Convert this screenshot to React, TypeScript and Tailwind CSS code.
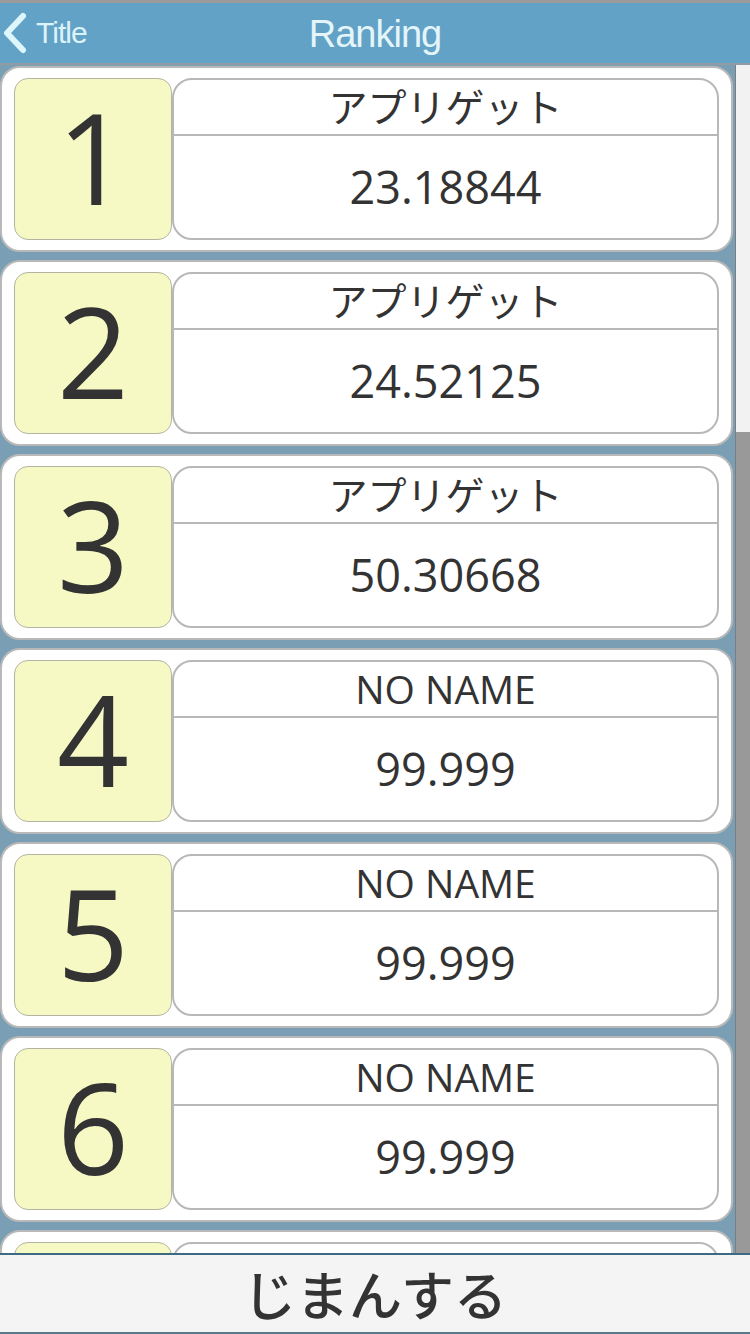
import React from "react";

type Entry = { rank: number; name: string; score: string };

const ENTRIES: Entry[] = [
    { rank: 1, name: "アプリゲット", score: "23.18844" },
    { rank: 2, name: "アプリゲット", score: "24.52125" },
    { rank: 3, name: "アプリゲット", score: "50.30668" },
    { rank: 4, name: "NO NAME", score: "99.999" },
    { rank: 5, name: "NO NAME", score: "99.999" },
    { rank: 6, name: "NO NAME", score: "99.999" },
];

const FONT = "font-['Open_Sans','Noto_Sans_CJK_JP',sans-serif]";

function RankCard({ entry }: { entry?: Entry }) {
    return (
        <div className="h-[186px] shrink-0 rounded-[20px] bg-white border-2 border-[#b9b9b9] flex items-stretch px-[12px] py-[10px]">
            <div className="w-[158px] rounded-[14px] bg-[#f7f9c4] border border-[#b4b4a4] flex items-center justify-center">
                {entry && (
                    <span className={`${FONT} text-[126px] leading-none font-medium text-[#333] -mt-[6px]`}>
                        {entry.rank}
                    </span>
                )}
            </div>
            <div className="flex-1 rounded-[20px] border-2 border-[#b8b8b8] bg-white flex flex-col overflow-hidden">
                <div className="h-[56px] border-b-2 border-[#b8b8b8] flex items-center justify-center">
                    {entry && (
                        <span className={`${FONT} text-[39px] leading-none text-[#333] -mt-[2px]`}>{entry.name}</span>
                    )}
                </div>
                <div className="flex-1 flex items-center justify-center">
                    {entry && (
                        <span className={`${FONT} text-[45px] leading-none text-[#333] -mt-[2px]`}>{entry.score}</span>
                    )}
                </div>
            </div>
        </div>
    );
}

export default function App() {
    return (
        <div className="w-[750px] h-[1334px] flex flex-col overflow-hidden bg-[#7a9fb4]">
            {/* Header */}
            <header className="h-[65px] shrink-0 border-t-[3px] border-[#9a9a9a] border-b-2 border-b-[#8f9ca4] bg-[#62a2c6] relative flex items-center justify-center">
                <div className="absolute left-[2px] top-0 h-full flex items-center gap-[8px]">
                    <svg width="26" height="42" viewBox="0 0 26 42" fill="none">
                        <path
                            d="M21 4 L5 21 L21 38"
                            stroke="#dcf6fb"
                            strokeWidth="6"
                            strokeLinecap="round"
                            strokeLinejoin="round"
                        />
                    </svg>
                    <span className="font-['Liberation_Sans',sans-serif] text-[30px] leading-none text-[#dcf3f9] tracking-[-1px]">
                        Title
                    </span>
                </div>
                <span className="font-['Liberation_Sans',sans-serif] text-[38px] leading-none text-[#e4f5fa] tracking-[-1px] mt-[2px]">
                    Ranking
                </span>
            </header>

            {/* List + scrollbar */}
            <div className="flex-1 flex overflow-hidden">
                <div className="flex-1 flex flex-col gap-[8px] pt-[1px] overflow-hidden">
                    {ENTRIES.map((e) => (
                        <RankCard key={e.rank} entry={e} />
                    ))}
                    {/* partially visible next row under the button */}
                    <RankCard />
                </div>
                <div className="w-[15px] shrink-0 ml-[2px] border-l border-[#7d7d7d] flex flex-col">
                    <div className="h-[367px] bg-[#f2f2f2]" />
                    <div className="flex-1 bg-[#999999]" />
                </div>
            </div>

            {/* Bottom button */}
            <button className="h-[81px] shrink-0 bg-[#f4f4f4] border-t-2 border-[#3d6983] border-b-2 border-b-[#5a7a8c] flex items-center justify-center">
                <span className="font-['Noto_Sans_CJK_JP',sans-serif] text-[53px] leading-none text-[#333] font-medium">
                    じまんする
                </span>
            </button>
        </div>
    );
}
